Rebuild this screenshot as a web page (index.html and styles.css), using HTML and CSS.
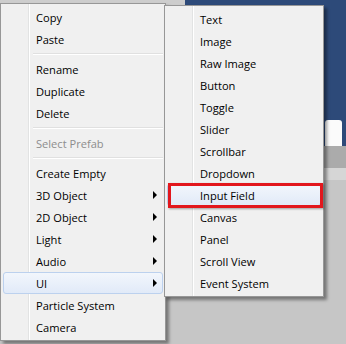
FILE: index.html
```html
<!DOCTYPE html>
<html>

<head>
  <link rel="stylesheet" href="styles.css">
</head>

<body>
  <div class="backdrop">
    <div class="strip"></div>
    <div class="viewport">
      <div class="field"></div>
    </div>
    <div class="toolbar"></div>
    <div class="panel"></div>
  </div>

  <div class="menu main">
    <div class="item">Copy</div>
    <div class="item">Paste</div>
    <div class="sep"></div>
    <div class="item">Rename</div>
    <div class="item">Duplicate</div>
    <div class="item">Delete</div>
    <div class="sep"></div>
    <div class="item disabled">Select Prefab</div>
    <div class="sep"></div>
    <div class="item">Create Empty</div>
    <div class="item sub">3D Object</div>
    <div class="item sub">2D Object</div>
    <div class="item sub">Light</div>
    <div class="item sub">Audio</div>
    <div class="item sub hot">UI</div>
    <div class="item">Particle System</div>
    <div class="item">Camera</div>
  </div>

  <div class="menu submenu">
    <div class="item">Text</div>
    <div class="item">Image</div>
    <div class="item">Raw Image</div>
    <div class="item">Button</div>
    <div class="item">Toggle</div>
    <div class="item">Slider</div>
    <div class="item">Scrollbar</div>
    <div class="item">Dropdown</div>
    <div class="item hot">Input Field</div>
    <div class="item">Canvas</div>
    <div class="item">Panel</div>
    <div class="item">Scroll View</div>
    <div class="item">Event System</div>
  </div>

  <div class="callout"></div>
</body>
</html>
```

FILE: styles.css
```css
body
{
   margin:0;
   width:346px;
   height:344px;
   overflow:hidden;
   background:#c3c3c3;
   font-family: "Open Sans", "Noto Sans", sans-serif;
   font-size:11.1px;
   color:#000;
}

.backdrop
{
   display:grid;
   grid-template-columns:185px 1fr;
   grid-template-rows:146px 22px 1fr;
   height:344px;
}
.strip
{
   background:#cdcdcd;
}
.viewport
{
   background:#2d4a79;
   display:flex;
   align-items:flex-end;
   justify-content:flex-end;
   padding-right:4px;
}
.field
{
   width:17px;
   height:26px;
   background:#fbfbfb;
   border-radius:3px 3px 0 0;
}
.toolbar
{
   grid-column:1 / 3;
   background:#ababab;
}
.panel
{
   grid-column:1 / 3;
   background:#c6c6c6;
   border-top:12px solid #d6d6d6;
}

.menu
{
   position:absolute;
   background-color:#f0f0f0;
   background-image:linear-gradient(to right, transparent 27px, #e2e3e3 27px, #e2e3e3 28px, #fff 28px, #fff 29px, transparent 29px);
   border:1px solid #979797;
   padding:2px;
   box-shadow:3px 3px 3px rgba(0,0,0,0.4);
}
.main
{
   left:0;
   top:3px;
   width:160px;
}
.submenu
{
   left:164px;
   top:5px;
   width:154px;
}

.item
{
   box-sizing:border-box;
   height:22px;
   line-height:19px;
   padding-left:32px;
   display:flex;
   align-items:center;
   justify-content:space-between;
   border:1px solid transparent;
   border-radius:3px;
}
.item.disabled
{
   color:#8d8d8d;
}
.item.sub::after
{
   content:"";
   margin-right:5px;
   border-left:4px solid #000;
   border-top:4px solid transparent;
   border-bottom:4px solid transparent;
}
.item.hot
{
   background:linear-gradient(to bottom, #f2f6fc, #e1eaf8);
   border-color:#bcd1ee;
}

.sep
{
   margin:3px 0 3px 30px;
   border-top:1px solid #e0e0e0;
   border-bottom:1px solid #fff;
}

.callout
{
   position:absolute;
   left:168px;
   top:183px;
   width:155px;
   height:25px;
   box-sizing:border-box;
   border:3px solid #e2171d;
   box-shadow:1px 1px 2px rgba(0,0,0,0.35);
}
```
